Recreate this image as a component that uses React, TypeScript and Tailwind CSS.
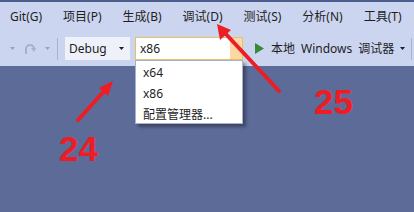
import React from "react";

const menus = ["Git(G)", "项目(P)", "生成(B)", "调试(D)", "测试(S)", "分析(N)", "工具(T)"];

function Caret({ color = "#1e1e1e" }: { color?: string }) {
  return (
    <svg width="5" height="3" viewBox="0 0 5 3">
      <path d="M0 0 L5 0 L2.5 3 Z" fill={color} />
    </svg>
  );
}

export default function App() {
  const font = { fontFamily: '"Noto Sans", "Noto Sans CJK SC", sans-serif' };
  return (
    <div className="relative w-[414px] h-[212px] overflow-hidden bg-[#5d6b99] text-[12px] text-[#1e1e1e]" style={font}>
      <div className="h-[2px] bg-[#4b5d8a]" />
      <div className="h-[29px] bg-[#ccd5f0] flex items-center pt-[1px]">
        {menus.map((m) => (
          <div key={m} className="px-[10px] leading-none whitespace-nowrap mr-[1px]">{m}</div>
        ))}
      </div>
      <div className="h-[35px] bg-[#ccd5f0] flex items-center">
        <div className="w-[10px]" />
        <Caret color="#9aa3bd" />
        <div className="w-[8px]" />
        <svg width="13" height="14" viewBox="0 0 13 14">
          <path d="M3 12 L3 7 A4 4 0 0 1 11 7 L11 8" fill="none" stroke="#a9b0c6" strokeWidth="2" />
          <path d="M8 6 L11 10 L13 6 Z" fill="#a9b0c6" />
        </svg>
        <div className="w-[9px]" />
        <Caret color="#9aa3bd" />
        <div className="w-[7px]" />
        <div className="w-[1px] h-[22px] bg-[#a8b3d3]" />
        <div className="w-[7px]" />
        <div className="w-[65px] h-[23px] bg-[#eef1fa] flex items-center justify-between pl-[4px] pr-[6px]">
          <span>Debug</span>
          <Caret />
        </div>
        <div className="w-[5px]" />
        <div className="relative w-[108px] h-[23px] bg-white border border-[#e5c365] flex items-center">
          <span className="pl-[4px] flex-1">x86</span>
          <div className="w-[12px] h-full bg-[#fdd8a4]" />
          <div className="absolute left-[-1px] top-[22px] w-[108px] h-[64px] bg-white border border-[#a7b1cf] shadow-[3px_3px_3px_rgba(0,0,0,0.35)] py-[1px] z-10">
            <div className="h-[21px] flex items-center pl-[7px]">x64</div>
            <div className="h-[21px] flex items-center pl-[7px]">x86</div>
            <div className="h-[21px] flex items-center pl-[7px]">配置管理器...</div>
          </div>
        </div>
        <div className="w-[12px]" />
        <svg width="9" height="11" viewBox="0 0 9 11">
          <path d="M0 0 L9 5.5 L0 11 Z" fill="#388a34" />
        </svg>
        <div className="w-[7px]" />
        <div className="flex items-center gap-[6px] whitespace-nowrap">
          <span>本地</span>
          <span>Windows</span>
          <span>调试器</span>
        </div>
        <div className="w-[6px]" />
        <Caret />
        <div className="w-[6px]" />
        <div className="w-[1px] h-[22px] bg-[#a8b3d3]" />
      </div>

      <svg className="absolute left-0 top-0 pointer-events-none" width="414" height="212" viewBox="0 0 414 212">
        <line x1="78" y1="120" x2="106" y2="89" stroke="#ee1c25" strokeWidth="4" strokeLinecap="round" />
        <path d="M113 81 L99 88 L108 96 Z" fill="#ee1c25" />
        <line x1="279" y1="91" x2="224" y2="32" stroke="#ee1c25" strokeWidth="4" strokeLinecap="round" />
        <path d="M217 24 L220 40 L231 30 Z" fill="#ee1c25" />
      </svg>
      <div
        className="absolute left-[59px] top-[131px] text-[35px] font-bold leading-none text-[#ee1c25]"
        style={{ fontFamily: '"Liberation Sans", Arial, sans-serif' }}
      >
        24
      </div>
      <div
        className="absolute left-[314px] top-[84px] text-[35px] font-bold leading-none text-[#ee1c25]"
        style={{ fontFamily: '"Liberation Sans", Arial, sans-serif' }}
      >
        25
      </div>
    </div>
  );
}
